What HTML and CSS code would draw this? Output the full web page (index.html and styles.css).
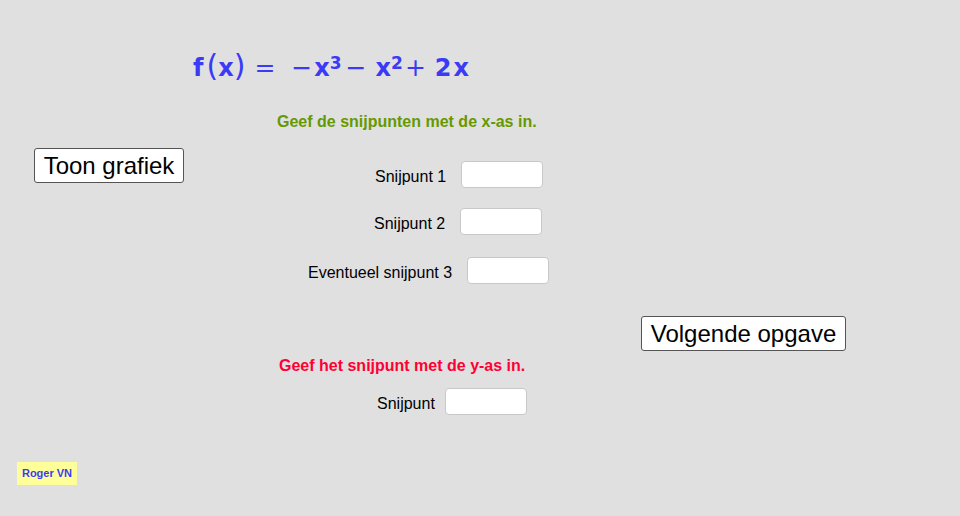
FILE: index.html
```html
<!DOCTYPE html>
<html>
<head>
<meta charset="utf-8">
<link rel="stylesheet" href="styles.css">
</head>
<body>
<div class="canvas">
  <div class="formula">
    <span class="f">f</span><span class="paren lp">(</span><span class="x">x</span><span class="paren">)</span><span class="op eq">=</span><span class="op neg">−</span><span class="x x1">x</span><sup class="sup s3">3</sup><span class="op minus">−</span><span class="x x2">x</span><sup class="sup s2">2</sup><span class="op plus">+</span><span class="num">2</span><span class="x lastx">x</span>
  </div>

  <div class="note green">Geef de snijpunten met de x-as in.</div>

  <button class="btn btn-toon">Toon grafiek</button>

  <div class="row row1"><span class="lbl">Snijpunt 1</span><span class="field"></span></div>
  <div class="row row2"><span class="lbl">Snijpunt 2</span><span class="field"></span></div>
  <div class="row row3"><span class="lbl">Eventueel snijpunt 3</span><span class="field"></span></div>

  <button class="btn btn-next">Volgende opgave</button>

  <div class="note red">Geef het snijpunt met de y-as in.</div>

  <div class="row row4"><span class="lbl">Snijpunt</span><span class="field"></span></div>

  <div class="author">Roger VN</div>
</div>
</body>
</html>
```

FILE: styles.css
```css
html, body {
  margin: 0;
  padding: 0;
  background: #e0e0e0;
}
.canvas {
  position: relative;
  width: 960px;
  height: 516px;
  background: #e0e0e0;
  font-family: "Liberation Sans", Arial, sans-serif;
  overflow: hidden;
}

/* formula */
.formula {
  position: absolute;
  left: 193px;
  top: 49px;
  display: flex;
  align-items: baseline;
  color: #3a3af7;
  font-family: "DejaVu Sans", sans-serif;
  font-weight: bold;
  font-size: 24px;
  line-height: 34px;
  white-space: nowrap;
}
.formula .paren { font-weight: normal; font-size: 30px; }
.formula .lp { margin-left: 3px; }
.formula .op { font-weight: normal; font-size: 25px; }
.formula .eq { margin-left: 9px; }
.formula .neg { margin-left: 16px; }
.formula .x1 { margin-left: 2px; }
.formula .minus { margin-left: 4px; }
.formula .x2 { margin-left: 9px; }
.formula .plus { margin-left: 2px; }
.formula .num { margin-left: 9px; }
.formula .lastx { margin-left: 2px; }
.formula .sup {
  font-size: 17px;
  position: relative;
  top: -7px;
  line-height: 0;
}

/* notes */
.note {
  position: absolute;
  font-size: 16px;
  font-weight: bold;
  line-height: 18px;
  white-space: nowrap;
}
.green { left: 277px; top: 113px; color: #669900; }
.red { left: 279px; top: 357px; color: #ff0033; }

/* buttons */
.btn {
  position: absolute;
  margin: 0;
  padding: 0 8px;
  height: 35px;
  background: #ffffff;
  border: 1px solid #555555;
  border-radius: 3px;
  font-family: "Liberation Sans", Arial, sans-serif;
  font-size: 24px;
  color: #000;
  line-height: 33px;
  white-space: nowrap;
}
.btn-toon { left: 34px; top: 148px; width: 150px; }
.btn-next { left: 641px; top: 316px; width: 205px; }

/* input rows */
.row {
  position: absolute;
  display: flex;
  align-items: center;
  gap: 15px;
  height: 27px;
}
.lbl {
  font-size: 16px;
  color: #000;
  white-space: nowrap;
  padding-top: 4px;
}
.field {
  display: block;
  width: 80px;
  height: 25px;
  background: #ffffff;
  border: 1px solid #c8c8c8;
  border-radius: 4px;
}
.row1 { left: 375px; top: 161px; }
.row2 { left: 374px; top: 208px; }
.row3 { left: 308px; top: 257px; }
.row4 { left: 377px; top: 388px; gap: 10px; }

/* author tag */
.author {
  position: absolute;
  left: 17px;
  top: 462px;
  width: 60px;
  height: 23px;
  background: #ffff99;
  color: #3a3af7;
  font-size: 11px;
  font-weight: bold;
  line-height: 23px;
  text-align: center;
}
```
